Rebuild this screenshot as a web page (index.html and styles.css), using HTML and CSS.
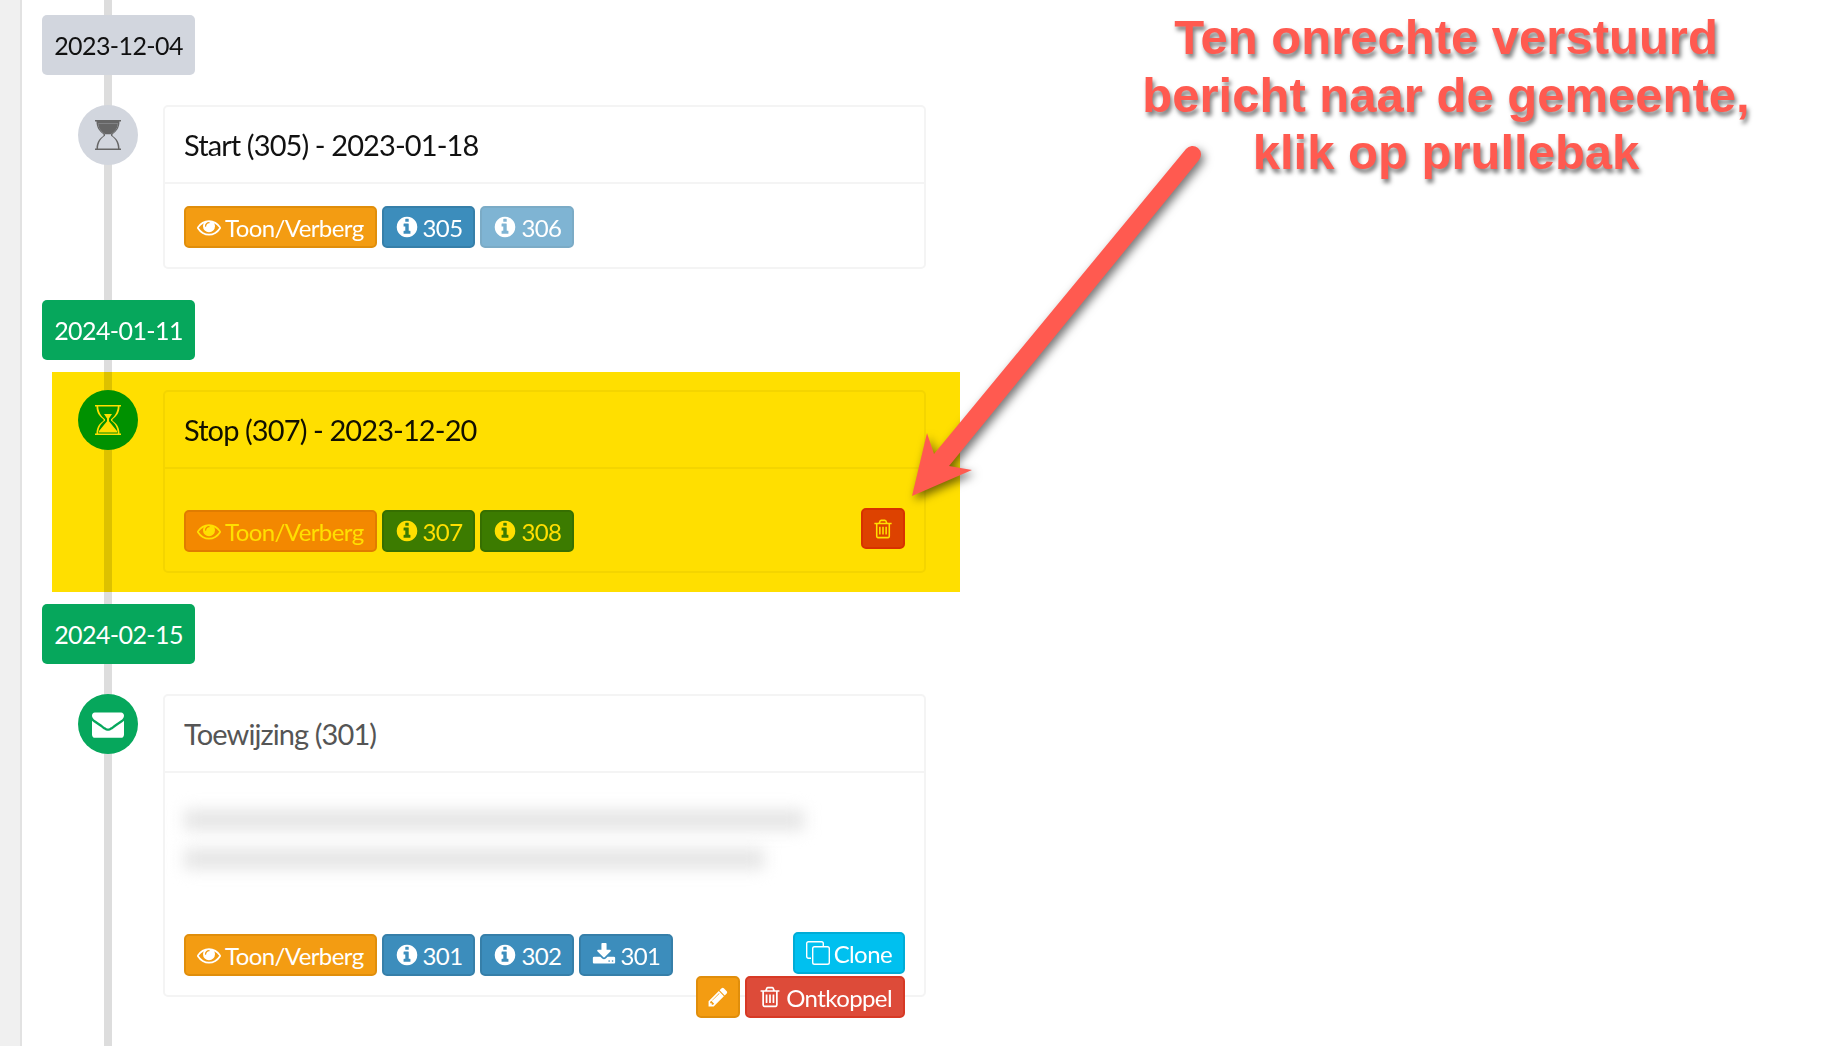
FILE: index.html
```html
<!DOCTYPE html>
<html lang="en">
<head>
<meta charset="UTF-8" />
<title>Tijdlijn</title>
<link rel="stylesheet" href="styles.css">
</head>
<body>
<svg class="icon-defs" width="0" height="0">
  <symbol id="i-eye" viewBox="0 0 1792 1792"><path d="M1664 960q-152-236-381-353 61 104 61 225 0 185-131.500 316.500t-316.500 131.500-316.500-131.500-131.500-316.500q0-121 61-225-229 117-381 353 133 205 333.500 326.500t434.500 121.500 434.500-121.500 333.500-326.500zm-720-384q0-20-14-34t-34-14q-125 0-214.500 89.500t-89.500 214.500q0 20 14 34t34 14 34-14 14-34q0-86 61-147t147-61q20 0 34-14t14-34zm848 384q0 34-20 69-140 230-376.500 368.500t-499.500 138.500-499.500-139-376.500-368q-20-35-20-69t20-69q140-229 376.500-368t499.500-139 499.500 139 376.500 368q20 35 20 69z"/></symbol>
  <symbol id="i-info" viewBox="0 0 1792 1792"><path d="M1152 1376v-160q0-14-9-23t-23-9h-96v-512q0-14-9-23t-23-9h-320q-14 0-23 9t-9 23v160q0 14 9 23t23 9h96v320h-96q-14 0-23 9t-9 23v160q0 14 9 23t23 9h448q14 0 23-9t9-23zm-128-896v-160q0-14-9-23t-23-9h-192q-14 0-23 9t-9 23v160q0 14 9 23t23 9h192q14 0 23-9t9-23zm640 416q0 209-103 385.500t-279.500 279.500-385.500 103-385.500-103-279.500-279.500-103-385.500 103-385.500 279.500-279.500 385.500-103 385.500 103 279.500 279.500 103 385.500z"/></symbol>
  <symbol id="i-download" viewBox="0 0 1792 1792"><path d="M1344 1344q0-26-19-45t-45-19-45 19-19 45 19 45 45 19 45-19 19-45zm256 0q0-26-19-45t-45-19-45 19-19 45 19 45 45 19 45-19 19-45zm128-224v320q0 40-28 68t-68 28h-1472q-40 0-68-28t-28-68v-320q0-40 28-68t68-28h465l135 136q58 56 136 56t136-56l136-136h464q40 0 68 28t28 68zm-325-569q17 41-14 70l-448 448q-18 19-45 19t-45-19l-448-448q-31-29-14-70 17-39 59-39h256v-448q0-26 19-45t45-19h256q26 0 45 19t19 45v448h256q42 0 59 39z"/></symbol>
  <symbol id="i-trash" viewBox="0 0 1792 1792"><path d="M704 736v576q0 14-9 23t-23 9h-64q-14 0-23-9t-9-23v-576q0-14 9-23t23-9h64q14 0 23 9t9 23zm256 0v576q0 14-9 23t-23 9h-64q-14 0-23-9t-9-23v-576q0-14 9-23t23-9h64q14 0 23 9t9 23zm256 0v576q0 14-9 23t-23 9h-64q-14 0-23-9t-9-23v-576q0-14 9-23t23-9h64q14 0 23 9t9 23zm128 724v-948h-896v948q0 22 7 40.500t14.500 27 10.500 8.500h832q3 0 10.500-8.500t14.500-27 7-40.500zm-672-1076h448l-48-117q-7-9-17-11h-317q-10 2-17 11zm928 32v64q0 14-9 23t-23 9h-96v948q0 83-47 143.500t-113 60.500h-832q-66 0-113-58.500t-47-141.500v-952h-96q-14 0-23-9t-9-23v-64q0-14 9-23t23-9h309l70-167q15-37 54-63t79-26h320q40 0 79 26t54 63l70 167h309q14 0 23 9t9 23z"/></symbol>
  <symbol id="i-pencil" viewBox="0 0 1792 1792"><path d="M491 1536l91-91-235-235-91 91v107h128v128h107zm523-928q0-22-22-22-10 0-17 7l-542 542q-7 7-7 17 0 22 22 22 10 0 17-7l542-542q7-7 7-17zm-54-192l416 416-832 832h-416v-416zm683 96q0 53-37 90l-166 166-416-416 166-165q36-38 90-38 53 0 91 38l235 234q37 39 37 91z"/></symbol>
  <symbol id="i-envelope" viewBox="0 0 1792 1792"><path d="M1792 710v794q0 66-47 113t-113 47h-1472q-66 0-113-47t-47-113v-794q44 49 101 87 362 246 497 345 57 42 92.500 65.500t94.500 48 110 24.500h2q51 0 110-24.500t94.500-48 92.500-65.500q170-123 498-345 57-39 100-87zm0-294q0 79-49 151t-122 123q-376 261-468 325-10 7-42.500 30.500t-54 38-52 32.500-57.500 27-50 9h-2q-23 0-50-9t-57.500-27-52-32.500-54-38-42.500-30.500q-91-64-262-182.500t-205-142.500q-62-42-117-115.500t-55-136.500q0-78 41.500-130t118.500-52h1472q65 0 112.500 47t47.500 113z"/></symbol>
  <symbol id="i-clone" viewBox="0 0 24 24"><path fill="none" stroke="currentColor" stroke-width="1.4" d="M5 17.300H2.500a1.800 1.800 0 0 1-1.800-1.800V2.500A1.800 1.800 0 0 1 2.500.7h13a1.800 1.800 0 0 1 1.800 1.800V5"/><rect x="6.700" y="5.700" width="16.600" height="17.600" rx="1.800" fill="none" stroke="currentColor" stroke-width="1.400"/></symbol>
  <symbol id="i-hourglass-start" viewBox="0 0 26 30"><path d="M0 0h26v1.500h-1.500c0 6-2.500 9.500-7 12.700v1.600c4.500 3.200 7 6.700 7 12.700H26V30H0v-1.500h1.500c0-6 2.500-9.500 7-12.700v-1.600c-4.500-3.200-7-6.700-7-12.700H0zM3 3.500c.3 4.500 2.800 8 7 10.800v1.400c-4.200 2.800-6.700 6.300-7 12.800h20c-.3-6.500-2.800-10-7-12.800v-1.400c4.200-2.800 6.700-6.300 7-10.800z" fill-rule="evenodd"/><path d="M3 3.500h20c-.3 4.500-2.800 8-7 10.800h-6c-4.200-2.800-6.700-6.300-7-10.800z"/></symbol>
  <symbol id="i-hourglass-end" viewBox="0 0 26 30"><path d="M0 0h26v1.500h-1.500c0 6-2.500 9.500-7 12.700v1.600c4.500 3.200 7 6.700 7 12.700H26V30H0v-1.500h1.500c0-6 2.500-9.500 7-12.700v-1.600c-4.500-3.200-7-6.700-7-12.700H0zM3.200 1.500c.3 5.500 2.800 9.500 6.800 12.800v1.400c-4 2.800-6.500 6.300-6.800 12.800h19.600c-.3-6.500-2.800-10-6.800-12.800v-1.400c4-3.300 6.500-7.300 6.800-12.800z" fill-rule="evenodd"/><path d="M9 9h8l-3 4.500v2.700l8 9.800v1.500H4V26l8-9.800v-2.700z"/></symbol>
</svg>

<aside class="side-strip"></aside>

<main class="timeline">
  <div class="time-label label-grey">2023-12-04</div>
  <section class="tl-item">
    <div class="tl-icon icon-grey"><svg class="ico-glass"><use href="#i-hourglass-start"/></svg></div>
    <div class="card">
      <h3 class="card-title">Start (305) - 2023-01-18</h3>
      <div class="card-body">
        <div class="card-foot">
          <div class="btn-row">
            <a class="btn btn-orange"><svg class="ico"><use href="#i-eye"/></svg>Toon/Verberg</a>
            <a class="btn btn-blue"><svg class="ico"><use href="#i-info"/></svg>305</a>
            <a class="btn btn-blue faded"><svg class="ico"><use href="#i-info"/></svg>306</a>
          </div>
        </div>
      </div>
    </div>
  </section>

  <div class="time-label label-green">2024-01-11</div>
  <section class="tl-item">
    <div class="tl-icon icon-darkgreen"><svg class="ico-glass"><use href="#i-hourglass-end"/></svg></div>
    <div class="card">
      <h3 class="card-title">Stop (307) - 2023-12-20</h3>
      <div class="card-body body-tall">
        <div class="card-foot">
          <div class="btn-row">
            <a class="btn btn-orange"><svg class="ico"><use href="#i-eye"/></svg>Toon/Verberg</a>
            <a class="btn btn-blue"><svg class="ico"><use href="#i-info"/></svg>307</a>
            <a class="btn btn-blue"><svg class="ico"><use href="#i-info"/></svg>308</a>
          </div>
          <div class="btn-stack">
            <a class="btn btn-red btn-square short"><svg class="ico ico-sm"><use href="#i-trash"/></svg></a>
          </div>
        </div>
      </div>
    </div>
    <div class="highlight"></div>
  </section>

  <div class="time-label label-green">2024-02-15</div>
  <section class="tl-item">
    <div class="tl-icon icon-green"><svg class="ico-mail"><use href="#i-envelope"/></svg></div>
    <div class="card">
      <h3 class="card-title title-muted">Toewijzing (301)</h3>
      <div class="card-body">
        <div class="blurred">
          <div class="blur-line line-a"></div>
          <div class="blur-line line-b"></div>
        </div>
        <div class="card-foot">
          <div class="btn-row">
            <a class="btn btn-orange"><svg class="ico"><use href="#i-eye"/></svg>Toon/Verberg</a>
            <a class="btn btn-blue"><svg class="ico"><use href="#i-info"/></svg>301</a>
            <a class="btn btn-blue"><svg class="ico"><use href="#i-info"/></svg>302</a>
            <a class="btn btn-blue"><svg class="ico"><use href="#i-download"/></svg>301</a>
          </div>
          <div class="btn-stack">
            <a class="btn btn-cyan"><svg class="ico ico-clone"><use href="#i-clone"/></svg>Clone</a>
            <div class="btn-row">
              <a class="btn btn-orange btn-square"><svg class="ico ico-sm"><use href="#i-pencil"/></svg></a>
              <a class="btn btn-red"><svg class="ico"><use href="#i-trash"/></svg>Ontkoppel</a>
            </div>
          </div>
        </div>
      </div>
    </div>
  </section>
</main>

<svg class="arrow" viewBox="0 0 320 400" width="320" height="400">
  <path d="M32 376 L47 313 L54 334 L306 29 A8.500 8.500 0 0 1 319 40 L69 346 L92 350 Z" transform="translate(-20 -20)"/>
</svg>

<div class="callout">Ten onrechte verstuurd<br>bericht naar de gemeente,<br>klik op prullebak</div>
</body>
</html>
```

FILE: styles.css
```css
body {
  margin: 0;
  height: 100vh;
  overflow: hidden;
  display: flex;
  background: #fff;
  font-family: Lato, "Noto Sans", sans-serif;
  color: #111;
}

.icon-defs {
  position: absolute;
}

.side-strip {
  width: 20px;
  background: #f0f0f0;
  border-right: 2px solid #e2e2e2;
  flex: none;
}

.timeline {
  position: relative;
  flex: 1;
  padding: 15px 0 0 20px;
}
.timeline::before {
  content: "";
  position: absolute;
  left: 82px;
  top: 0;
  bottom: 0;
  width: 8px;
  background: #ddd;
}

.time-label {
  position: relative;
  width: 153px;
  height: 60px;
  line-height: 60px;
  text-align: center;
  border-radius: 5px;
  font-size: 25px;
  letter-spacing: -0.6px;
}
.label-grey {
  background: #d2d6de;
  color: #111;
}
.label-green {
  background: #06a75c;
  color: #fff;
}

.tl-item {
  position: relative;
  width: 918px;
  display: flex;
  gap: 25px;
  margin: 30px 0 31px;
  padding-left: 36px;
  box-sizing: border-box;
}

.highlight {
  position: absolute;
  left: 10px;
  right: 0;
  top: -18px;
  bottom: -19px;
  background: #ffdf00;
  mix-blend-mode: multiply;
}

.tl-icon {
  position: relative;
  flex: none;
  width: 60px;
  height: 60px;
  border-radius: 50%;
  display: flex;
  align-items: center;
  justify-content: center;
}
.icon-grey {
  background: #d2d6de;
  color: #666;
}
.icon-darkgreen {
  background: #00a65a;
  color: #fff;
}
.icon-green {
  background: #06a75c;
  color: #fff;
}
.ico-glass {
  width: 26px;
  height: 30px;
  fill: currentColor;
}
.ico-mail {
  width: 32px;
  height: 32px;
  fill: currentColor;
}

.card {
  position: relative;
  width: 763px;
  box-sizing: border-box;
  border: 2px solid #f4f4f4;
  border-radius: 5px;
  background: #fff;
}
.card-title {
  margin: 0;
  height: 77px;
  box-sizing: border-box;
  border-bottom: 2px solid #f4f4f4;
  padding-left: 19px;
  line-height: 75px;
  font-size: 29px;
  font-weight: 400;
  letter-spacing: -0.9px;
}
.title-muted {
  color: #555;
}

.card-body {
  padding: 22px 19px 19px;
}
.body-tall {
  padding-top: 41px;
}

.blurred {
  height: 139px;
  padding-top: 15px;
  box-sizing: border-box;
}
.blur-line {
  height: 20px;
  background: #e4e4e4;
  filter: blur(8px);
}
.line-a {
  width: 620px;
  margin-bottom: 19px;
}
.line-b {
  width: 580px;
}

.card-foot {
  display: flex;
  justify-content: space-between;
  align-items: flex-start;
  height: 42px;
}
.btn-row {
  display: flex;
  gap: 5px;
}
.btn-stack {
  display: flex;
  flex-direction: column;
  align-items: flex-end;
  gap: 2px;
  margin-top: -2px;
}

.btn {
  display: inline-flex;
  align-items: center;
  gap: 4px;
  height: 42px;
  box-sizing: border-box;
  padding: 0 11px;
  border: 2px solid transparent;
  border-radius: 5px;
  color: #fff;
  font-size: 24px;
  letter-spacing: -0.6px;
}
.btn-orange {
  background: #f39c12;
  border-color: #e08e0b;
}
.btn-blue {
  background: #3c8dbc;
  border-color: #367fa9;
}
.btn-red {
  background: #dd4b39;
  border-color: #d73925;
}
.btn-cyan {
  background: #00c0ef;
  border-color: #00acd6;
}
.faded {
  opacity: 0.65;
}
.btn-square {
  width: 44px;
  padding: 0;
  justify-content: center;
}
.short {
  height: 41px;
}

.ico {
  width: 24px;
  height: 24px;
  fill: currentColor;
  flex: none;
}
.ico-sm {
  width: 22px;
  height: 22px;
}
.ico-clone {
  fill: none;
}

.arrow {
  position: absolute;
  left: 900px;
  top: 140px;
  fill: #ff5a50;
  overflow: visible;
  filter: drop-shadow(3px 4px 5px rgba(0, 0, 0, 0.55));
}

.callout {
  position: absolute;
  left: 1100px;
  top: 9px;
  width: 692px;
  text-align: center;
  font-family: "Liberation Sans", Arial, sans-serif;
  font-weight: 700;
  font-size: 49px;
  line-height: 57.500px;
  color: #ff5a50;
  -webkit-text-stroke: 6px #fff;
  paint-order: stroke fill;
  text-shadow: 2px 4px 4px rgba(0, 0, 0, 0.5);
}
```
